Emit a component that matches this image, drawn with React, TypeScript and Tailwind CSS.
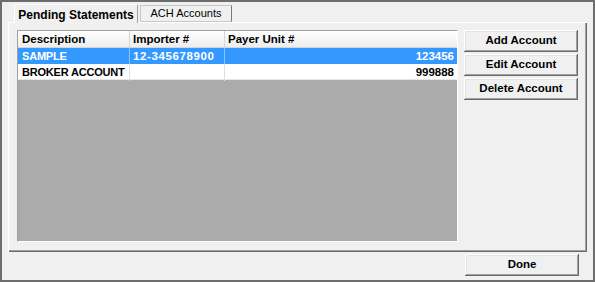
import React from 'react'

const rows = [
  { desc: 'SAMPLE', importer: '12-345678900', payer: '123456', selected: true },
  { desc: 'BROKER ACCOUNT', importer: '', payer: '999888', selected: false },
]

const raised =
  'shadow-[inset_-1px_-1px_#696969,inset_1px_1px_#ffffff,inset_-2px_-2px_#a0a0a0,inset_2px_2px_#e3e3e3]'

function WinButton({ label }: { label: string }) {
  return (
    <button
      className={`h-[22px] w-[114px] bg-[#f0f0f0] text-[11.5px] font-bold text-black flex items-center justify-center whitespace-nowrap ${raised}`}
    >
      {label}
    </button>
  )
}

export default function App() {
  return (
    <div className="w-[595px] h-[282px] border-2 border-[#6d6d6d] bg-[#f0f0f0] flex flex-col font-['Liberation_Sans',Arial,sans-serif] text-black">
      <div className="flex flex-col pl-[6px] pt-[2px]">
        {/* tab strip */}
        <div className="flex items-end h-[18px] pl-[6px]">
          <div className="relative z-10 -mb-px h-[19px] w-[124px] bg-[#f0f0f0] border-t border-l border-white border-r border-r-[#a0a0a0] text-[12px] font-bold flex items-center justify-center pt-px whitespace-nowrap">
            Pending Statements
          </div>
          <div className="h-[17px] w-[92px] ml-[2px] border border-[#c8c8c8] border-r-[#7a7a7a] bg-[#f0f0f0] text-[11px] flex items-center justify-center whitespace-nowrap">
            ACH Accounts
          </div>
        </div>

        {/* tab panel */}
        <div className="w-[579px] h-[230px] border-t border-l border-white shadow-[inset_-1px_-1px_#696969,inset_-2px_-2px_#a0a0a0] flex gap-[6px] pl-[8px] pt-[7px] pb-[8px] pr-[6px]">
          <div className="w-[441px] h-[212px] flex flex-col bg-[#ababab] border border-[#a0a0a0] border-b-white border-r-white overflow-hidden">
            <div className="grid grid-cols-[112px_95px_1fr] h-[17px] bg-gradient-to-b from-white to-[#ededed] border-b border-[#d5d5d5] text-[11.5px] font-bold whitespace-nowrap">
              <div className="border-r border-[#d5d5d5] pl-[4px] flex items-center">Description</div>
              <div className="border-r border-[#d5d5d5] pl-[3px] flex items-center">Importer #</div>
              <div className="pl-[3px] flex items-center">Payer Unit #</div>
            </div>
            {rows.map(r => (
              <div
                key={r.desc}
                className={`grid grid-cols-[112px_95px_1fr] h-[16px] text-[11.5px] font-bold border-b whitespace-nowrap ${
                  r.selected ? 'bg-[#3399ff] text-white border-[#3399ff]' : 'bg-white text-black border-[#e6e6e6]'
                }`}
              >
                <div className={`border-r pl-[4px] flex items-center overflow-hidden text-[11px] tracking-[-0.2px] ${r.selected ? 'border-[#8cc4ff]' : 'border-[#e0e0e0]'}`}>{r.desc}</div>
                <div className={`border-r pl-[3px] flex items-center overflow-hidden tracking-[0.6px] ${r.selected ? 'border-[#8cc4ff]' : 'border-[#e0e0e0]'}`}>{r.importer}</div>
                <div className="pr-[3px] flex items-center justify-end">{r.payer}</div>
              </div>
            ))}
          </div>

          <div className="flex flex-col gap-[2px]">
            <WinButton label="Add Account" />
            <WinButton label="Edit Account" />
            <WinButton label="Delete Account" />
          </div>
        </div>
      </div>

      {/* footer */}
      <div className="flex justify-end pr-[14px] pt-[2px]">
        <WinButton label="Done" />
      </div>
    </div>
  )
}
